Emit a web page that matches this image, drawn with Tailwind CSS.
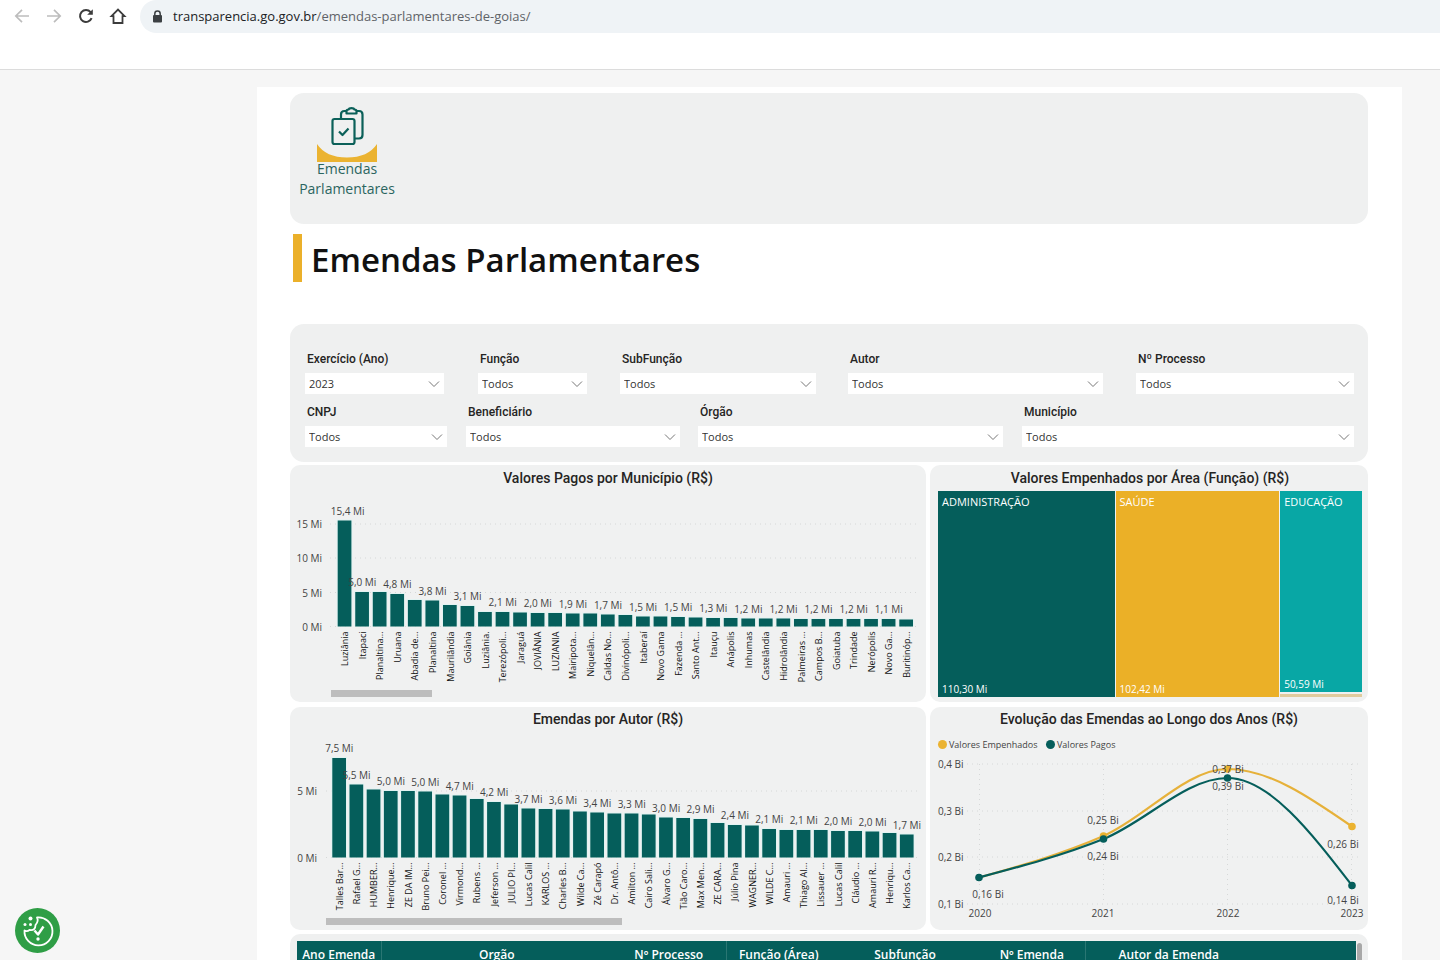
<!DOCTYPE html>
<html lang="pt-BR">
<head>
<meta charset="utf-8">
<title>Emendas Parlamentares</title>
<script src="https://cdn.jsdelivr.net/npm/@tailwindcss/browser@4"></script>
</head>
<body class="h-screen overflow-hidden flex flex-col bg-[#f6f6f6] font-['Open_Sans','Noto_Sans',sans-serif] text-[#252423]">

<header class="h-[70px] shrink-0 bg-white border-b border-[#dcdcdc] flex items-start">
  <nav class="flex items-center gap-2 pl-[10px] h-8 w-[140px] shrink-0" aria-label="Navegação">
    <button type="button" aria-label="Voltar" class="size-6 grid place-items-center text-[#bdbdbd]">
      <svg class="size-5" viewBox="0 0 20 20" fill="none" stroke="currentColor" stroke-width="1.700"><path d="M17 10H4M10 3.800L3.800 10L10 16.200"/></svg>
    </button>
    <button type="button" aria-label="Avançar" class="size-6 grid place-items-center text-[#bdbdbd]">
      <svg class="size-5" viewBox="0 0 20 20" fill="none" stroke="currentColor" stroke-width="1.700"><path d="M3 10H16M10 3.800L16.200 10L10 16.200"/></svg>
    </button>
    <button type="button" aria-label="Recarregar" class="size-6 grid place-items-center text-[#3c3c3c]">
      <svg class="size-5" viewBox="0 0 20 20" fill="none" stroke="currentColor" stroke-width="2"><path d="M15.600 12.200A6 6 0 1 1 14.600 6.100"/><path d="M16.800 3.200V8.800H11.200Z" fill="currentColor" stroke="none"/></svg>
    </button>
    <button type="button" aria-label="Página inicial" class="size-6 grid place-items-center text-[#3c3c3c]">
      <svg class="size-5" viewBox="0 0 20 20" fill="none" stroke="currentColor" stroke-width="1.800"><path d="M3.500 10.200L10 3.500L16.500 10.200H14.500V17H5.500V10.200Z"/></svg>
    </button>
  </nav>
  <a href="#" class="flex-1 h-[33px] rounded-l-full bg-[#eff3f6] flex items-center gap-[10px] pl-3 text-[13px] text-[#5f6368]">
    <svg class="w-[11px] h-[14px] shrink-0" viewBox="0 0 11 14"><path d="M2.800 6V3.800a2.700 2.700 0 0 1 5.400 0V6" fill="none" stroke="#3c4043" stroke-width="1.500"/><rect x="1" y="5" width="9" height="7.500" rx="1" fill="#3c4043"/></svg>
    <span><span class="text-[#202124]">transparencia.go.gov.br</span>/emendas-parlamentares-de-goias/</span>
  </a>
</header>

<main class="flex-1 min-h-0 overflow-hidden pt-[17px] pl-[257px] pr-[38px]">
 <div class="bg-white min-h-full pt-[6px] pl-[33px] pr-[34px]">

  <section class="h-[131px] rounded-[14px] bg-[#eff0f0] pt-[13px] pl-[10px]">
    <a href="#" class="flex w-[94px] flex-col items-center text-center text-[14px] leading-5 text-[#2b655f]">
      <svg class="w-[60px] h-[56px] -mb-[3px]" viewBox="317 106 60 56" fill="none">
        <path d="M317 144Q326 157.500 347 157.500Q368 157.500 377 144V162H317Z" fill="#ebb331"/>
        <g stroke="#0b6059" stroke-width="2.200" stroke-linejoin="round">
          <path d="M341 118V114.500Q341 111 344.500 111H346.500M356.500 111H359Q362.500 111 362.500 114.500V135Q362.500 138.500 359 138.500H355"/>
          <path d="M346.500 111Q346.500 109.500 348.500 109.500Q349 108.200 351.500 108.200Q354 108.200 354.500 109.500Q356.500 109.500 356.500 111V113.500H346.500Z"/>
          <rect x="332.500" y="119" width="22" height="25" rx="2"/>
          <path d="M339 131.500L342.500 135L348.500 128.500"/>
        </g>
      </svg>
      <span>Emendas<br>Parlamentares</span>
    </a>
  </section>

  <div class="h-[100px] pt-[10px] pl-[3px] flex items-start">
    <span class="w-[9px] h-12 bg-[#ebb02a]"></span>
    <h1 class="pl-[9px] pt-[2px] leading-12 text-[33px] font-semibold text-[#111]">Emendas Parlamentares</h1>
  </div>

  <form class="h-[138px] rounded-[14px] bg-[#eff0f0] pt-[25px] pl-[15px] pr-[14px] text-[11px] text-[#333]">
    <div class="flex h-[53px]" id="row1"></div>
    <div class="flex h-[53px]" id="row2"></div>
  </form>

  <div class="mt-[3px] grid grid-cols-[636fr_438fr] gap-x-1 gap-y-[5px]">
    <section class="h-[237px] rounded-[10px] bg-[#f0f1f1] overflow-hidden">
      <h2 class="h-[26px] leading-[26px] text-center font-['Roboto',sans-serif] font-medium text-[14px]">Valores Pagos por Município (R$)</h2>
      <svg id="c1" class="block w-full" viewBox="290 491 636 211" font-size="10" fill="#444"></svg>
    </section>

    <section class="h-[237px] rounded-[10px] bg-[#f0f1f1] flex flex-col pb-[5px] px-2 pr-[6px]">
      <h2 class="h-[26px] leading-[26px] text-center font-['Roboto',sans-serif] font-medium text-[14px]">Valores Empenhados por Área (Função) (R$)</h2>
      <div class="flex-1 grid grid-cols-[177fr_164fr_82fr] gap-px text-white text-[11px] leading-4">
        <div class="bg-[#055e5b] flex flex-col justify-between px-1 pt-[3px]"><span>ADMINISTRAÇÃO</span><span class="text-[10px]">110,30 Mi</span></div>
        <div class="bg-[#ebb027] flex flex-col justify-between px-1 pt-[3px]"><span>SAÚDE</span><span class="text-[10px]">102,42 Mi</span></div>
        <div class="flex flex-col gap-[2px]">
          <div class="flex-1 bg-[#08a7a5] flex flex-col justify-between px-1 pt-[3px]"><span>EDUCAÇÃO</span><span class="text-[10px]">50,59 Mi</span></div>
          <div class="h-[3px] bg-[#e0cb9d]"></div>
        </div>
      </div>
    </section>

    <section class="h-[223px] rounded-[10px] bg-[#f0f1f1] overflow-hidden">
      <h2 class="h-[25px] leading-[25px] text-center font-['Roboto',sans-serif] font-medium text-[14px]">Emendas por Autor (R$)</h2>
      <svg id="c2" class="block w-full" viewBox="290 732 636 198" font-size="10" fill="#444"></svg>
    </section>

    <section class="h-[223px] rounded-[10px] bg-[#f0f1f1] overflow-hidden">
      <h2 class="h-[25px] leading-[25px] text-center font-['Roboto',sans-serif] font-medium text-[14px]">Evolução das Emendas ao Longo dos Anos (R$)</h2>
      <svg class="block w-full" viewBox="930 732 438 198" font-size="10" fill="#444">
        <g font-size="9">
          <circle cx="942.500" cy="744.500" r="4.500" fill="#ebb331"/><text x="949" y="748">Valores Empenhados</text>
          <circle cx="1050.500" cy="744.500" r="4.500" fill="#055e5b"/><text x="1057" y="748">Valores Pagos</text>
        </g>
        <g stroke="#d6d8d8" stroke-dasharray="1 4">
          <path d="M967 764H1358M967 811H1358M967 857H1358M967 904H1358M979.500 764V904M1103.500 764V904M1227.500 764V904M1351.500 764V904"/>
        </g>
        <text x="938" y="768">0,4 Bi</text><text x="938" y="815">0,3 Bi</text><text x="938" y="861">0,2 Bi</text><text x="938" y="908">0,1 Bi</text>
        <g fill="none" stroke-width="2.200">
          <path stroke="#e6b13a" d="M979 877.500C1020.500 865.900 1062 854.100 1103.500 836C1145 817.900 1186 769 1227.500 769C1269 769 1310.500 797.700 1352 826.500"/>
          <path stroke="#055e5b" d="M979 877.500C1020.500 866.500 1062 855.600 1103.500 839C1145 822.400 1186 778 1227.500 778C1269 778 1310.500 831.800 1352 885.500"/>
        </g>
        <g fill="#ebb331"><circle cx="1103.500" cy="836" r="3.800"/><circle cx="1227.500" cy="769" r="3.800"/><circle cx="1352" cy="826.500" r="3.800"/></g>
        <g fill="#055e5b"><circle cx="979" cy="877.500" r="3.800"/><circle cx="1103.500" cy="839" r="3.800"/><circle cx="1227.500" cy="778" r="3.800"/><circle cx="1352" cy="885.500" r="3.800"/></g>
        <g text-anchor="middle">
          <text x="988" y="898">0,16 Bi</text><text x="1103" y="824">0,25 Bi</text><text x="1103" y="860">0,24 Bi</text>
          <text x="1228" y="773">0,37 Bi</text><text x="1228" y="790">0,39 Bi</text><text x="1343" y="848">0,26 Bi</text><text x="1343" y="904">0,14 Bi</text>
          <text x="980" y="917">2020</text><text x="1103" y="917">2021</text><text x="1228" y="917">2022</text><text x="1352" y="917">2023</text>
        </g>
      </svg>
    </section>
  </div>

  <section class="mt-1 h-[120px] rounded-t-[10px] bg-[#eff0f0] pt-[7px] pl-[7px] pr-[6px] flex">
    <div class="flex-1">
      <table class="w-full table-fixed bg-[#055e5b] text-white text-[12px]">
        <colgroup><col class="w-[84px]"><col class="w-[231px]"><col class="w-[114px]"><col class="w-[105px]"><col class="w-[148px]"><col class="w-[106px]"><col class="w-[167px]"><col></colgroup>
        <thead>
          <tr class="h-7 whitespace-nowrap">
            <th class="font-semibold border-r border-white/15">Ano Emenda</th><th class="font-semibold">Orgão</th><th class="font-semibold border-r border-white/15">Nº Processo</th><th class="font-semibold">Função (Área)</th><th class="font-semibold">Subfunção</th><th class="font-semibold border-r border-white/15">Nº Emenda</th><th class="font-semibold">Autor da Emenda</th><td></td>
          </tr>
        </thead>
      </table>
    </div>
    <div class="w-[6px] pl-px pt-[2px]"><div class="h-full rounded-t bg-[#a8a8a8]"></div></div>
  </section>
 </div>
</main>

<button type="button" aria-label="Preferências de cookies" class="fixed left-[15px] bottom-[7px] size-[45px] rounded-full bg-[#2f9e46]">
  <svg class="size-[45px]" viewBox="0 0 45 45" fill="none" stroke="#fff" stroke-width="1.800" stroke-linejoin="round">
    <path d="M22 9.500A14 14 0 1 1 9.500 22.500Q12 24 14.500 22Q20.500 23 20.500 17Q24 13 22 9.500Z"/>
    <path d="M19.500 22.500L23 26.500L28.500 18.500" stroke-width="2.400"/>
    <g fill="#fff" stroke="none"><circle cx="15.500" cy="10.500" r="2"/><circle cx="10" cy="16.500" r="1.500"/><circle cx="15.500" cy="16.500" r="1.500"/><circle cx="23" cy="31" r="1.700"/></g>
  </svg>
</button>

<script>
// Filters: label, value, share of the row's width, gap before
function filters(id, rows) {
  document.getElementById(id).innerHTML = rows.map(function (r, i) {
    return '<div class="min-w-0 basis-0" style="flex-grow:' + r[2] + ';margin-left:' + r[3] + 'px">' +
      '<label for="' + id + i + '" class="block pl-[2px] h-6 leading-5 whitespace-nowrap font-[\'Roboto\',sans-serif] font-medium text-[12px] text-[#252423]">' + r[0] + '</label>' +
      '<div class="relative"><select id="' + id + i + '" class="block w-full h-[21px] appearance-none bg-white pt-px pl-1 pr-6"><option>' + r[1] + '</option></select>' +
      '<svg class="pointer-events-none absolute right-1 top-[5px] w-3 h-3" viewBox="0 0 12 12" fill="none" stroke="#777"><path d="M1 3.500L6 8.500L11 3.500"/></svg></div></div>';
  }).join('');
}
filters('row1', [['Exercício (Ano)', '2023', 139, 0], ['Função', 'Todos', 109, 34], ['SubFunção', 'Todos', 196, 33], ['Autor', 'Todos', 255, 32], ['Nº Processo', 'Todos', 218, 33]]);
filters('row2', [['CNPJ', 'Todos', 142, 0], ['Beneficiário', 'Todos', 214, 19], ['Órgão', 'Todos', 305, 18], ['Município', 'Todos', 332, 19]]);

// Column charts
function columns(id, o) {
  var s = '';
  o.ticks.forEach(function (t) {
    s += '<path d="M' + o.gx + ' ' + t[1] + 'H919" stroke="#d6d8d8" stroke-dasharray="1 4"/><text x="' + o.tx + '" y="' + (t[1] + 4) + '" text-anchor="end">' + t[0] + '</text>';
  });
  o.names.forEach(function (n, i) {
    var x = o.x0 + i * o.step, y = o.tops[i];
    s += '<rect x="' + (x - 1) + '" y="' + (y - 1) + '" width="15.700" height="' + (o.base - y + 1) + '" fill="#e2f3f2"/>';
    s += '<rect x="' + x + '" y="' + y + '" width="13.700" height="' + (o.base - y) + '" fill="#055e5b"/>';
    s += '<text transform="translate(' + (x + 10.5) + ' ' + (o.base + 5) + ') rotate(-90)" text-anchor="end" font-size="9" fill="#111">' + n + '</text>';
  });
  o.labels.forEach(function (v, i) {
    var b = i ? i * 2 - 1 : 0;
    s += '<text x="' + (o.x0 + b * o.step + 7 + (i ? 0 : o.dx)) + '" y="' + (o.tops[b] - 6) + '" text-anchor="middle">' + v + ' Mi</text>';
  });
  s += '<rect x="' + o.sb[0] + '" y="' + o.sb[1] + '" width="' + o.sb[2] + '" height="7" fill="#bdbdbd"/>';
  document.getElementById(id).innerHTML = s;
}
columns('c1', {
  x0: 337.7, step: 17.55, base: 626.5, gx: 330, tx: 322, dx: 3, sb: [331, 690, 101],
  ticks: [['15 Mi', 524], ['10 Mi', 558], ['5 Mi', 592.5], ['0 Mi', 626.5]],
  names: ['Luziânia', 'Itapaci', 'Planaltina…', 'Uruana', 'Abadia de…', 'Planaltina', 'Maurilândia', 'Goiânia', 'Luziânia.', 'Terezópoli…', 'Jaraguá', 'JOVIÂNIA', 'LUZIANIA', 'Mairipota…', 'Niquelân…', 'Caldas No…', 'Divinópoli…', 'Itaberaí', 'Novo Gama', 'Fazenda …', 'Santo Ant…', 'Itauçu', 'Anápolis', 'Inhumas', 'Castelândia', 'Hidrolândia', 'Palmeiras …', 'Campos B…', 'Goiatuba', 'Trindade', 'Nerópolis', 'Novo Ga…', 'Buritinóp…'],
  tops: [520.5, 592, 592, 594, 600, 600.5, 605, 606, 612, 612, 612.5, 613, 613, 613.5, 613.5, 614.5, 615, 616.5, 616.5, 617, 617.5, 618, 618, 618.5, 618.5, 618.5, 619, 619, 619, 619, 619, 619, 619.5],
  labels: ['15,4', '5,0', '4,8', '3,8', '3,1', '2,1', '2,0', '1,9', '1,7', '1,5', '1,5', '1,3', '1,2', '1,2', '1,2', '1,2', '1,1']
});
columns('c2', {
  x0: 332.3, step: 17.2, base: 857.5, gx: 326, tx: 317, dx: 0, sb: [326, 918, 296],
  ticks: [['5 Mi', 791], ['0 Mi', 857.5]],
  names: ['Talles Bar…', 'Rafael G…', 'HUMBER…', 'Henrique…', 'ZE DA IM…', 'Bruno Pei…', 'Coronel …', 'Virmond…', 'Rubens …', 'Jeferson …', 'JULIO PI…', 'Lucas Calil', 'KARLOS …', 'Charles B…', 'Wilde Ca…', 'Zé Carapó', 'Dr. Antô…', 'Amilton …', 'Cairo Sali…', 'Álvaro G…', 'Tião Caro…', 'Max Men…', 'ZE CARA…', 'Júlio Pina', 'WAGNER…', 'WILDE C…', 'Amauri …', 'Thiago Al…', 'Lissauer …', 'Lucas Calil', 'Cláudio …', 'Amauri R…', 'Henriqu…', 'Karlos Ca…'],
  tops: [758, 784.5, 789.5, 791, 791, 791.5, 794.5, 795.5, 799, 802, 804.5, 808.5, 809, 809.5, 811.5, 812.5, 813.5, 813.5, 814.5, 817.5, 818, 819, 823, 825, 825.5, 829, 830, 830, 830, 831, 831, 831.5, 833, 834.5],
  labels: ['7,5', '5,5', '5,0', '5,0', '4,7', '4,2', '3,7', '3,6', '3,4', '3,3', '3,0', '2,9', '2,4', '2,1', '2,1', '2,0', '2,0', '1,7']
});
</script>
</body>
</html>
